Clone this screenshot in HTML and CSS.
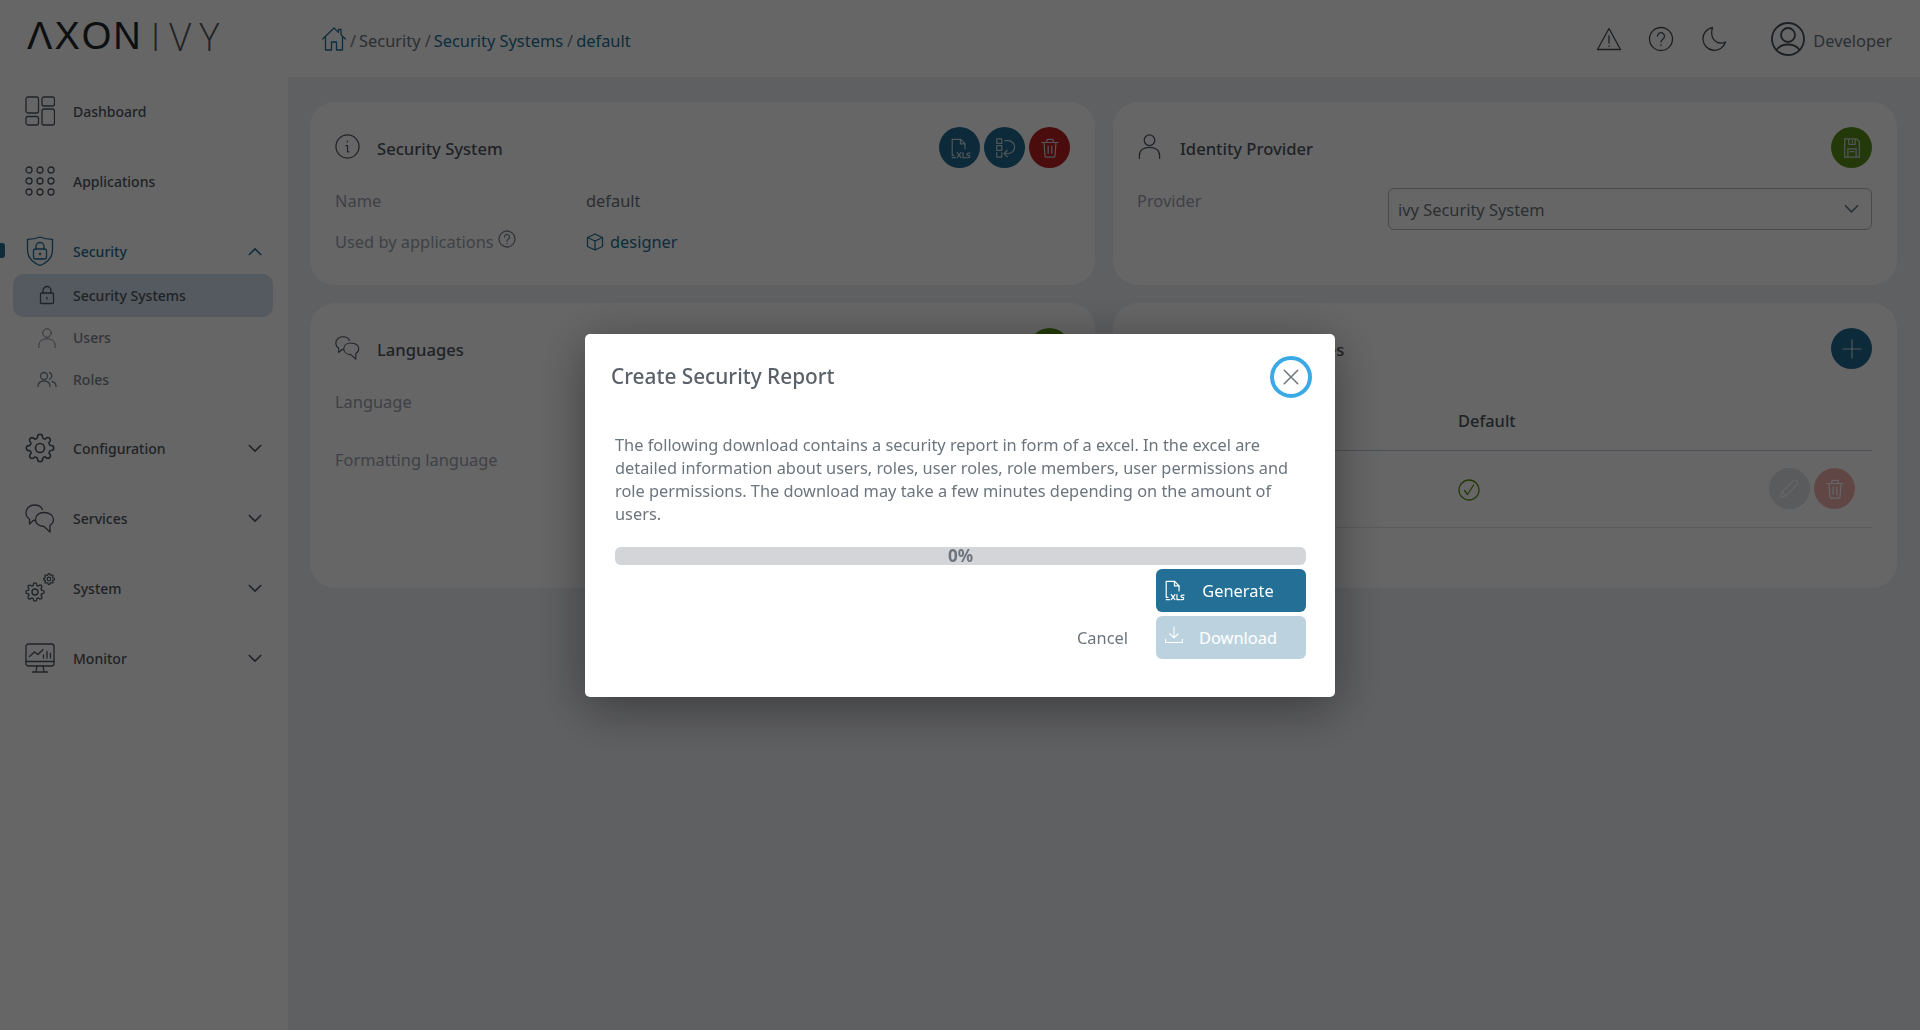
FILE: index.html
```html
<!DOCTYPE html>
<html lang="en">
<head>
  <meta charset="UTF-8">
  <meta name="viewport" content="width=device-width, initial-scale=1.0">
  <title>Security Systems - Axon Ivy</title>
  <link rel="stylesheet" href="styles.css">
</head>
<body>
  <svg class="sprite" xmlns="http://www.w3.org/2000/svg">
    <symbol id="i-cog" viewBox="0 0 24 24">
      <path d="M19.4 15a1.65 1.65 0 0 0 .33 1.82l.06.06a2 2 0 0 1 0 2.83 2 2 0 0 1-2.83 0l-.06-.06a1.65 1.65 0 0 0-1.82-.33 1.65 1.65 0 0 0-1 1.51V21a2 2 0 0 1-2 2 2 2 0 0 1-2-2v-.09A1.65 1.65 0 0 0 9 19.4a1.65 1.65 0 0 0-1.82.33l-.06.06a2 2 0 0 1-2.83 0 2 2 0 0 1 0-2.83l.06-.06a1.65 1.65 0 0 0 .33-1.82 1.65 1.65 0 0 0-1.51-1H3a2 2 0 0 1-2-2 2 2 0 0 1 2-2h.09A1.65 1.65 0 0 0 4.6 9a1.65 1.65 0 0 0-.33-1.82l-.06-.06a2 2 0 0 1 0-2.83 2 2 0 0 1 2.83 0l.06.06a1.65 1.65 0 0 0 1.82.33H9a1.65 1.65 0 0 0 1-1.51V3a2 2 0 0 1 2-2 2 2 0 0 1 2 2v.09a1.65 1.65 0 0 0 1 1.51 1.65 1.65 0 0 0 1.82-.33l.06-.06a2 2 0 0 1 2.83 0 2 2 0 0 1 0 2.83l-.06.06a1.65 1.65 0 0 0-.33 1.82V9a1.65 1.65 0 0 0 1.51 1H21a2 2 0 0 1 2 2 2 2 0 0 1-2 2h-.09a1.65 1.65 0 0 0-1.51 1z"/>
      <circle cx="12" cy="12" r="3.6"/>
    </symbol>
    <symbol id="i-chat" viewBox="0 0 30 30">
      <path d="M10 17.5H8.2L4.5 21v-5C2 14.600 1 12.500 1 10c0-4.600 3.600-8 8.500-8 3.900 0 6.800 1.700 8 4.500"/>
      <path d="M19 9.500c5.400 0 9.500 2.900 9.500 7 0 2.600-1.500 4.500-3.500 5.700V29l-6-5.500c-5 0-8.500-2.900-8.500-7 0-4.100 3.500-7 8.500-7z"/>
    </symbol>
    <symbol id="i-xls" viewBox="0 0 24 24">
      <path d="M5.500 20H3.500V2.500h9l5 5V13"/>
      <path d="M12.500 2.500v5h5"/>
      <path d="M3.500 22.500H7M9 17l4 5.500M13 17l-4 5.500M15.200 17v5.500h2.800M23 17.500h-2.200c-1.500 0-1.500 2.500 0 2.500h.7c1.500 0 1.500 2.500 0 2.500h-2"/>
    </symbol>
    <symbol id="i-trash" viewBox="0 0 24 24">
      <path d="M3 6h18M8.500 6V3.800c0-.7.500-1.300 1.300-1.300h4.400c.8 0 1.300.6 1.300 1.300V6M5.500 6l1 14.500c0 .8.700 1.500 1.500 1.500h8c.8 0 1.500-.7 1.500-1.500l1-14.500M10 10v8M14 10v8"/>
    </symbol>
    <symbol id="i-chevron" viewBox="0 0 16 10">
      <path d="M1.500 1.500 8 8l6.500-6.500"/>
    </symbol>
    <symbol id="i-person" viewBox="0 0 24 26">
      <circle cx="12" cy="6.500" r="5.500"/>
      <path d="M1.500 25.500v-3c0-5.500 4.500-8.500 10.500-8.500s10.500 3 10.500 8.500v3"/>
    </symbol>
  </svg>

  <aside class="sidebar">
    <div class="logo"><span class="logo-axon">ΛXON</span><span class="logo-ivy"><span class="logo-i">I</span>VY</span></div>
    <nav class="menu">
      <a class="menu-item">
        <svg class="menu-icon" viewBox="0 0 30 30"><rect x="1" y="1" width="12.500" height="16" rx="2"/><rect x="17" y="1" width="12.500" height="9" rx="2"/><rect x="1" y="20.500" width="12.500" height="8.500" rx="2"/><rect x="17" y="13" width="12.500" height="16" rx="2"/></svg>
        <span>Dashboard</span>
      </a>
      <a class="menu-item">
        <svg class="menu-icon" viewBox="0 0 30 30"><circle cx="4" cy="4" r="3"/><circle cx="15" cy="4" r="3"/><circle cx="26" cy="4" r="3"/><circle cx="4" cy="15" r="3"/><circle cx="15" cy="15" r="3"/><circle cx="26" cy="15" r="3"/><circle cx="4" cy="26" r="3"/><circle cx="15" cy="26" r="3"/><circle cx="26" cy="26" r="3"/></svg>
        <span>Applications</span>
      </a>
      <a class="menu-item menu-item-active">
        <svg class="menu-icon" viewBox="0 0 30 30"><path d="M15 1c4 1.800 8 2.400 12.500 2.400V14c0 7.500-5 12.500-12.500 15.500C7.500 26.500 2.500 21.500 2.500 14V3.400C7 3.400 11 2.800 15 1z"/><rect x="8.500" y="13" width="13" height="10" rx="2"/><path d="M11 13v-2.500a4 4 0 0 1 8 0V13"/><circle cx="15" cy="18" r=".6"/></svg>
        <span>Security</span>
        <svg class="chevron chevron-up"><use href="#i-chevron"/></svg>
      </a>
      <div class="submenu">
        <a class="submenu-item submenu-item-active">
          <svg class="submenu-icon" viewBox="0 0 20 20"><rect x="3.500" y="8" width="13" height="10.500" rx="1"/><path d="M6 8V5.500a4 4 0 0 1 8 0V8M10 12.500v1.500"/></svg>
          <span>Security Systems</span>
        </a>
        <a class="submenu-item">
          <svg class="submenu-icon" viewBox="0 0 24 26"><use href="#i-person"/></svg>
          <span>Users</span>
        </a>
        <a class="submenu-item">
          <svg class="submenu-icon" viewBox="0 0 20 20"><circle cx="7" cy="6" r="3.500"/><path d="M1 16.500c0-3.500 2.500-5.500 6-5.500s6 2 6 5.500M12.500 2.700a3.500 3.500 0 0 1 0 6.600M15 11.500c2.500.6 4 2.500 4 5"/></svg>
          <span>Roles</span>
        </a>
      </div>
      <a class="menu-item">
        <svg class="menu-icon"><use href="#i-cog"/></svg>
        <span>Configuration</span>
        <svg class="chevron"><use href="#i-chevron"/></svg>
      </a>
      <a class="menu-item">
        <svg class="menu-icon"><use href="#i-chat"/></svg>
        <span>Services</span>
        <svg class="chevron"><use href="#i-chevron"/></svg>
      </a>
      <a class="menu-item">
        <svg class="menu-icon" viewBox="0 0 30 30"><use class="cog-big" href="#i-cog" x="0" y="9" width="20" height="20"/><use class="cog-small" href="#i-cog" x="18" y="0" width="12" height="12"/></svg>
        <span>System</span>
        <svg class="chevron"><use href="#i-chevron"/></svg>
      </a>
      <a class="menu-item">
        <svg class="menu-icon" viewBox="0 0 30 30"><rect x="1" y="1" width="28" height="22" rx="2.500"/><path d="M1 18.500h28M12 23l-1 5.500M18 23l1 5.500M7.500 29h15M4.500 13.500l5-4.500 3.500 2.500 5-5M18.500 15v-3M22 15V8.500M25.500 15v-4.500"/></svg>
        <span>Monitor</span>
        <svg class="chevron"><use href="#i-chevron"/></svg>
      </a>
    </nav>
  </aside>

  <div class="page">
    <header class="topbar">
      <div class="breadcrumb">
        <svg class="home-icon" viewBox="0 0 24 24"><path d="M.7 12 12 1l4.500 4.400V2.500h2.500v5.300L23.300 12M3.500 10v13h6v-8h5v8h6V10"/></svg>
        <span class="crumb-sep">/</span><a class="crumb-plain">Security</a><span class="crumb-sep">/</span><a>Security Systems</a><span class="crumb-sep">/</span><a>default</a>
      </div>
      <div class="topbar-right">
        <svg class="top-icon" viewBox="0 0 26 26"><path d="M13 2.500 1.500 23.500h23zM13 10v7M13 19.800v.6"/></svg>
        <svg class="top-icon top-icon-help" viewBox="0 0 26 26"><circle cx="13" cy="13" r="11.500"/><path d="M9.500 10a3.500 3.500 0 1 1 5.500 3c-1.300.9-2 1.500-2 3M13 19v.6"/></svg>
        <svg class="top-icon" viewBox="0 0 26 26"><path d="M11.500 1.500a11.500 11.500 0 1 0 13 14.500c-2 1-4 1.300-6 1C12.500 16 9 10 11.500 1.500z"/></svg>
        <svg class="user-icon" viewBox="0 0 34 34"><circle cx="17" cy="17" r="16"/><circle cx="17" cy="13" r="7"/><path d="M5.500 28c2.500-3.800 6.500-5.500 11.500-5.500S26 24.200 28.500 28"/></svg>
        <span class="user-name">Developer</span>
      </div>
    </header>

    <main class="content">
      <section class="card">
        <div class="card-head">
          <svg class="card-icon" viewBox="0 0 26 26"><circle cx="13" cy="13" r="12"/><path d="M11.500 12H13v6.500h1.500M12.800 7.500v.6"/></svg>
          <h2>Security System</h2>
          <div class="card-actions">
            <button class="round-btn btn-primary"><svg><use href="#i-xls"/></svg></button>
            <button class="round-btn btn-primary"><svg viewBox="0 0 24 24"><path d="M3 2h5.500v5H3zM3 9.500h5.500M3 9.500v5M8.500 9.500v5M3 17v5h5.500v-5M3 14.500h5.500M12 4h3.500a7 7 0 0 1 0 14H11M14.500 14.500 11 18l3.500 3.500"/></svg></button>
            <button class="round-btn btn-danger"><svg><use href="#i-trash"/></svg></button>
          </div>
        </div>
        <div class="field">
          <div class="field-label">Name</div>
          <div class="field-value">default</div>
        </div>
        <div class="field">
          <div class="field-label">Used by applications
            <svg class="help-icon" viewBox="0 0 18 18"><circle cx="9" cy="9" r="8"/><path d="M6.500 7a2.500 2.500 0 1 1 3.900 2c-.9.6-1.400 1-1.400 2.200M9 13.300v.5"/></svg>
          </div>
          <div class="field-value field-link">
            <svg class="cube-icon" viewBox="0 0 18 18"><path d="M9 1 1.500 4.500v9L9 17l7.500-3.500v-9zM1.500 4.500 9 8l7.500-3.500M9 8v9"/></svg>
            <a>designer</a>
          </div>
        </div>
      </section>

      <section class="card">
        <div class="card-head">
          <svg class="card-icon card-icon-person"><use href="#i-person"/></svg>
          <h2>Identity Provider</h2>
          <div class="card-actions">
            <button class="round-btn btn-success"><svg viewBox="0 0 24 24"><path d="M4 2h13l3 3v17H4zM8.500 2v6h7V2M12.500 4v2M7.500 22v-9h9v9M10 16h4"/></svg></button>
          </div>
        </div>
        <div class="field">
          <div class="field-label">Provider</div>
          <div class="select">
            <span>ivy Security System</span>
            <svg class="select-chevron"><use href="#i-chevron"/></svg>
          </div>
        </div>
      </section>

      <section class="card card-tall">
        <div class="card-head">
          <svg class="card-icon"><use href="#i-chat"/></svg>
          <h2>Languages</h2>
          <div class="card-actions">
            <button class="round-btn btn-success"><svg viewBox="0 0 24 24"><path d="M4 2h13l3 3v17H4zM8.500 2v6h7V2M12.500 4v2M7.500 22v-9h9v9M10 16h4"/></svg></button>
          </div>
        </div>
        <div class="field field-tall">
          <div class="field-label">Language</div>
        </div>
        <div class="field field-tall">
          <div class="field-label">Formatting language</div>
        </div>
      </section>

      <section class="card card-tall">
        <div class="card-head">
          <svg class="card-icon"><use href="#i-chat"/></svg>
          <h2>Language Properties</h2>
          <div class="card-actions">
            <button class="round-btn btn-primary"><svg viewBox="0 0 24 24"><path d="M12 2v20M2 12h20"/></svg></button>
          </div>
        </div>
        <table class="lang-table">
          <thead>
            <tr><th class="col-name">Name</th><th>Default</th><th></th></tr>
          </thead>
          <tbody>
            <tr>
              <td></td>
              <td><svg class="check-icon" viewBox="0 0 22 22"><circle cx="11" cy="11" r="10"/><path d="m6.500 11.500 3 4 6-9.500"/></svg></td>
              <td class="row-actions">
                <button class="round-btn btn-muted"><svg viewBox="0 0 24 24"><path d="M3 21l1.500-6L16.500 3c1-1 3-1 4 0s1 3 0 4L8.500 19.500zM4.500 15l4 4.500"/></svg></button>
                <button class="round-btn btn-faded"><svg><use href="#i-trash"/></svg></button>
              </td>
            </tr>
          </tbody>
        </table>
      </section>
    </main>
  </div>

  <div class="mask">
    <div class="dialog">
      <div class="dialog-head">
        <h1>Create Security Report</h1>
        <button class="dialog-close"><svg viewBox="0 0 16 16"><path d="M2 2l12 12M14 2 2 14"/></svg></button>
      </div>
      <div class="dialog-body">
        <p>The following download contains a security report in form of a excel. In the excel are detailed information about users, roles, user roles, role members, user permissions and role permissions. The download may take a few minutes depending on the amount of users.</p>
        <div class="progress">0%</div>
        <div class="dialog-actions">
          <button class="btn btn-main"><svg><use href="#i-xls"/></svg><span>Generate</span></button>
          <div class="dialog-row">
            <a class="btn-text">Cancel</a>
            <button class="btn btn-main btn-disabled"><svg class="download-icon" viewBox="0 0 24 24"><path d="M12 2v13M7 10.500l5 5 5-5M2 17v4h20v-4"/></svg><span>Download</span></button>
          </div>
        </div>
      </div>
    </div>
  </div>
</body>
</html>
```

FILE: styles.css
```css
* {
  box-sizing: border-box;
}

html, body {
  height: 100%;
}

body {
  margin: 0;
  display: flex;
  overflow: hidden;
  font-family: "Noto Sans", Arial, sans-serif;
  font-size: 16.4px;
  color: #495057;
  background-color: #edeff5;
}

svg {
  fill: none;
  stroke: currentColor;
  stroke-width: 1.3;
  stroke-linecap: round;
  stroke-linejoin: round;
}

.sprite {
  display: none;
}

/* sidebar */
.sidebar {
  width: 288px;
  flex-shrink: 0;
  background-color: #fff;
  padding: 0 15px 0 13px;
}

.logo {
  height: 88px;
  display: flex;
  align-items: center;
  padding: 0 0 16px 14px;
  color: #22262a;
  font-family: "Liberation Sans", Arial, sans-serif;
  font-size: 38px;
  line-height: 1;
}

.logo-axon {
  letter-spacing: 2px;
}

.logo-ivy {
  margin-left: 8px;
  letter-spacing: 8px;
  font-family: "Open Sans", Arial, sans-serif;
  font-weight: 300;
  color: #55595e;
}

.logo-i {
  letter-spacing: 9px;
}

.menu-item {
  position: relative;
  height: 46px;
  margin-bottom: 24px;
  padding: 0 11px 0 12px;
  display: flex;
  align-items: center;
  gap: 18px;
  font-size: 14px;
  font-weight: 500;
  color: #4f5660;
}

.menu-icon {
  width: 30px;
  height: 30px;
  flex-shrink: 0;
}

.cog-big {
  stroke-width: 1.6;
}

.cog-small {
  stroke-width: 2.4;
}

.menu-item .chevron {
  margin-left: auto;
}

.chevron {
  width: 14px;
  height: 9px;
  stroke-width: 1.8;
}

.chevron-up {
  transform: rotate(180deg);
}

.menu-item-active {
  margin-bottom: 0;
  color: #236f95;
}

.menu-item-active::before {
  content: "";
  position: absolute;
  left: -13px;
  top: 15px;
  width: 5px;
  height: 15px;
  border-radius: 0 3px 3px 0;
  background-color: #236f95;
}

.submenu {
  margin-bottom: 24px;
}

.submenu-item {
  height: 42px;
  padding: 0 0 1px 24px;
  display: flex;
  align-items: center;
  gap: 16px;
  border-radius: 10px;
  font-size: 14px;
  font-weight: 500;
  color: #7d848e;
}

.submenu-item-active {
  height: 43px;
  background-color: #d3e2ee;
  color: #4f5660;
}

.submenu-icon {
  width: 20px;
  height: 20px;
}

/* top bar */
.page {
  flex: 1;
  min-width: 0;
}

.topbar {
  height: 77px;
  background-color: #fff;
  padding: 0 28px 0 34px;
  display: flex;
  justify-content: space-between;
  align-items: center;
}

.breadcrumb {
  display: flex;
  align-items: center;
  color: #236f95;
}

.breadcrumb a {
  padding-top: 3px;
}

.home-icon {
  width: 24px;
  height: 24px;
}

.crumb-sep {
  margin: 3px 3px 0 4px;
  color: #7d848e;
}

.crumb-plain {
  color: #6c757d;
}

.topbar-right {
  display: flex;
  align-items: center;
  color: #495057;
}

.top-icon {
  width: 26px;
  height: 26px;
  margin-left: 27px;
}

.top-icon-help {
  margin-left: 26px;
}

.user-icon {
  width: 34px;
  height: 34px;
  margin: 0 8px 0 44px;
  stroke-width: 1.8;
}

.user-name {
  padding-top: 3px;
  color: #6c757d;
}

/* cards */
.content {
  display: grid;
  grid-template-columns: 785px 784px;
  grid-template-rows: 183px 285px;
  gap: 18px;
  padding: 25px 23px 0 22px;
}

.card {
  background-color: #fff;
  border-radius: 25px;
  padding: 25px;
}

.card:nth-child(even) {
  padding-left: 24px;
}

.card-head {
  height: 42px;
  margin-bottom: 11px;
  display: flex;
  align-items: center;
  gap: 17px;
}

.card-head h2 {
  margin: 0;
  font-size: 16.6px;
  font-weight: 500;
  color: #4f5660;
}

.card-icon {
  width: 25px;
  height: 25px;
  margin-top: -4px;
  color: #4f5660;
}

.card-icon-person {
  margin-right: 1px;
}

.card-actions {
  margin: -1px 0 0 auto;
  display: flex;
  gap: 4px;
}

.round-btn {
  width: 41px;
  height: 41px;
  padding: 0;
  border: none;
  border-radius: 50%;
  display: flex;
  align-items: center;
  justify-content: center;
  color: #c8d8e0;
}

.round-btn svg {
  width: 22px;
  height: 22px;
}

.btn-primary {
  background-color: #1f6a8f;
}

.btn-danger {
  background-color: #b81f1f;
}

.btn-success {
  background-color: #5a9018;
}

.btn-muted {
  background-color: #dfe3e6;
  color: #fff;
}

.btn-faded {
  background-color: #f3b0b0;
  color: #fff;
}

.field {
  display: grid;
  grid-template-columns: 251px 1fr;
  min-height: 39px;
  line-height: 40px;
  color: #9ca3af;
}

.field-tall {
  min-height: 58px;
}

.field-label {
  display: flex;
  align-items: center;
  height: 40px;
  padding-top: 1px;
  gap: 4px;
}

.help-icon {
  width: 18px;
  height: 18px;
  margin-top: -6px;
  color: #7d848e;
}

.field-value {
  padding-top: 1px;
  color: #6c757d;
}

.field-link {
  display: flex;
  align-items: center;
  height: 40px;
  gap: 6px;
  color: #236f95;
}

.cube-icon {
  width: 18px;
  height: 18px;
}

.select {
  height: 42px;
  margin-top: 8px;
  padding: 0 10px 0 9px;
  border: 1px solid #b6bac0;
  border-radius: 6px;
  display: flex;
  align-items: center;
  justify-content: space-between;
  color: #6c757d;
}

.select span {
  padding-top: 2px;
}

.select-chevron {
  width: 15px;
  height: 10px;
  margin-right: 2px;
  stroke-width: 1.7;
}

/* language table */
.lang-table {
  width: 100%;
  border-collapse: collapse;
}

.lang-table th {
  height: 69px;
  padding: 11px 0 0;
  border-bottom: 1px solid #b9c9d6;
  text-align: left;
  font-size: 16.4px;
  font-weight: 500;
  color: #4f5660;
}

.lang-table th.col-name {
  width: 321px;
}

.lang-table td {
  height: 77px;
  padding: 0;
  border-bottom: 1px solid #dde2e6;
}

.check-icon {
  display: block;
  width: 22px;
  height: 22px;
  margin-top: 2px;
  color: #5a9018;
}

.row-actions .round-btn {
  display: inline-flex;
}

.lang-table .row-actions {
  text-align: right;
  padding-right: 17px;
}

/* dialog */
.mask {
  position: fixed;
  inset: 0;
  background-color: rgba(0, 0, 0, 0.6);
  display: flex;
  align-items: center;
  justify-content: center;
}

.dialog {
  width: 750px;
  height: 363px;
  background-color: #fff;
  border-radius: 5px;
  box-shadow: 0 10px 50px rgba(0, 0, 0, 0.4);
}

.dialog-head {
  padding: 22px 23px 0 26px;
  display: flex;
  align-items: center;
  justify-content: space-between;
}

.dialog-head h1 {
  margin: -2px 0 0;
  font-size: 20.8px;
  font-weight: 500;
  color: #5a6169;
}

.dialog-close {
  width: 42px;
  height: 42px;
  padding: 0;
  border: 4px solid #3ba9e6;
  border-radius: 50%;
  background-color: #fff;
  display: flex;
  align-items: center;
  justify-content: center;
  color: #6c757d;
}

.dialog-close svg {
  width: 18px;
  height: 18px;
}

.dialog-body {
  padding: 36px 29px 0 30px;
}

.dialog-body p {
  margin: 0 0 21px;
  font-size: 16.35px;
  line-height: 23px;
  color: #6c757d;
}

.progress {
  height: 18px;
  border-radius: 6px;
  background-color: #d4d5d9;
  text-align: center;
  font-size: 17px;
  font-weight: 700;
  line-height: 18px;
  color: #6c757d;
}

.dialog-actions {
  margin-top: 4px;
  display: flex;
  flex-direction: column;
  align-items: flex-end;
  gap: 4px;
}

.dialog-row {
  display: flex;
  align-items: center;
  gap: 28px;
}

.btn {
  width: 150px;
  height: 43px;
  padding: 0 15px 0 7px;
  border: none;
  border-radius: 6px;
  display: flex;
  align-items: center;
  font-family: inherit;
  font-size: 16.4px;
}

.btn svg {
  width: 22px;
  height: 22px;
  flex-shrink: 0;
}

.btn .download-icon {
  width: 20px;
  height: 20px;
  margin: -4px 1px 0 1px;
}

.btn span {
  flex: 1;
  text-align: center;
}

.btn-main {
  background-color: #236f95;
  color: #fff;
}

.btn-disabled {
  opacity: 0.3;
}

.btn-text {
  color: #6c757d;
}
```
